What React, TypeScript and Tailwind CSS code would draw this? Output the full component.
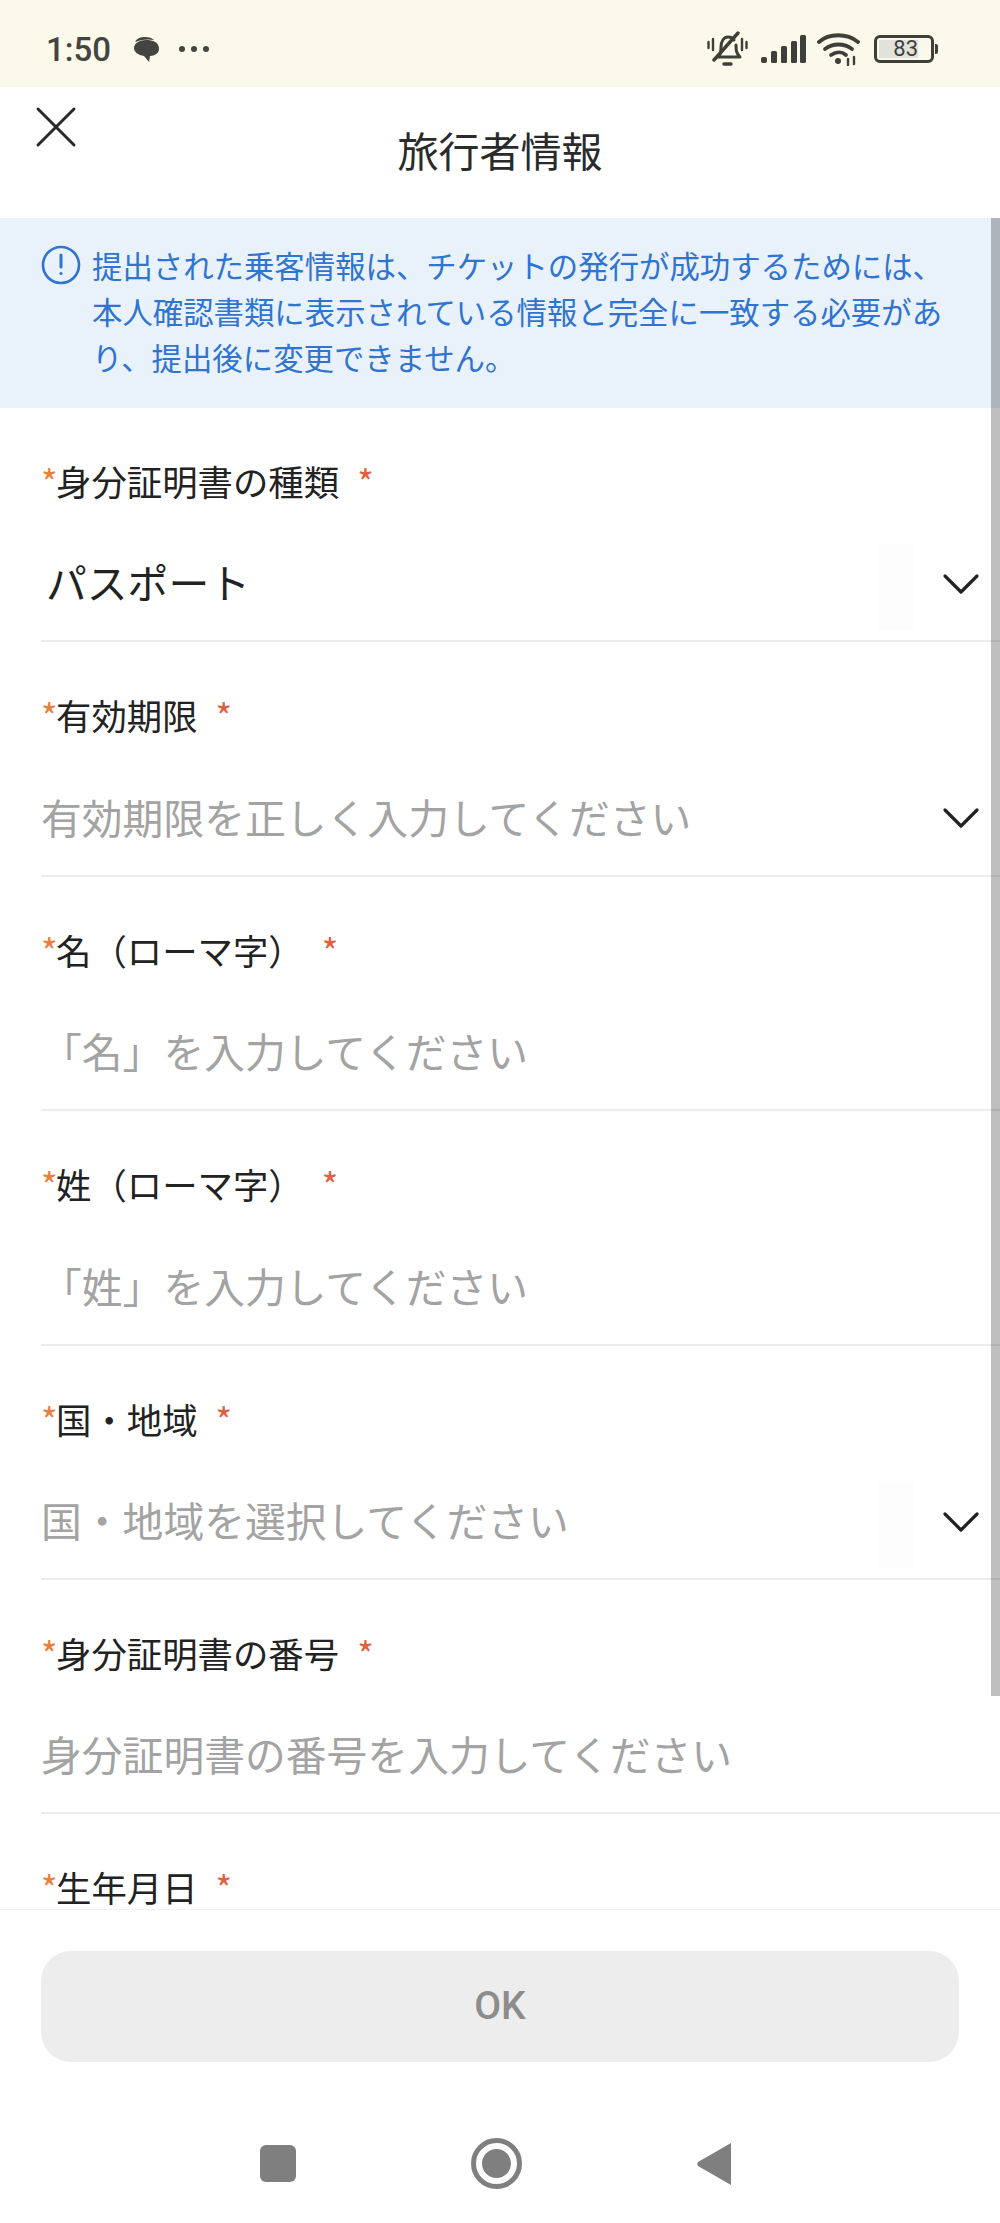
import { ChevronDown, X } from "lucide-react";

const CJK = "font-['Noto_Sans_CJK_JP','Noto_Sans',sans-serif]";

const fields = [
  { label: "身分証明書の種類", value: "パスポート", select: true, ghost: true },
  { label: "有効期限", placeholder: "有効期限を正しく入力してください", select: true },
  { label: "名（ローマ字）", placeholder: "「名」を入力してください" },
  { label: "姓（ローマ字）", placeholder: "「姓」を入力してください" },
  { label: "国・地域", placeholder: "国・地域を選択してください", select: true, ghost: true },
  { label: "身分証明書の番号", placeholder: "身分証明書の番号を入力してください" },
];

function Label({ text }: { text: string }) {
  return (
    <div className="flex h-[62px] items-center text-[35.4px] leading-[62px] text-[#222222]">
      <span className="w-[15px] text-[#e8803c]">*</span>
      <span>{text}</span>
      <span className="ml-[18px] text-[#e2603f]">*</span>
    </div>
  );
}

function Field({ label, value, placeholder, select, ghost }: { label: string; value?: string; placeholder?: string; select?: boolean; ghost?: boolean }) {
  return (
    <div className="ml-[41px] h-[234.4px] border-b-2 border-[#ececec] pt-[42px]">
      <Label text={label} />
      <div className="relative mt-[14px] flex h-[112px] items-center justify-between pr-[7px]">
        {value ? (
          <span className="ml-[5px] text-[40.8px] text-[#222222]">{value}</span>
        ) : (
          <span className="text-[40.8px] text-[#a3a3a3]">{placeholder}</span>
        )}
        {ghost && <div className="absolute right-[87px] top-[17px] h-[87px] w-[35px] bg-[#fdfdfd]" />}
        {select && <ChevronDown className="relative mt-[4px]" size={64} strokeWidth={1.2} color="#222222" />}
      </div>
    </div>
  );
}

function StatusIcons() {
  return (
    <div className="flex items-center text-[#3f3f3a]">
      <svg width="41" height="36" viewBox="0 0 41 36" fill="none" stroke="currentColor" strokeWidth="3" strokeLinecap="round" strokeLinejoin="round">
        <path d="M12 25c2-3 2-6 2-9 0-6 3-10 7-10 3 0 5 1 6 3M29 14c0 5 0 8 4 12H11" />
        <path d="M7 29 31 2" strokeWidth="3.4" />
        <path d="M1.5 11v6M6 8v11M35 8v11M39.5 11v6" strokeWidth="2.4" />
        <path d="M17 33h7" strokeWidth="3.4" />
      </svg>
      <svg width="45" height="28" viewBox="0 0 45 28" fill="currentColor" className="ml-[13px]">
        <rect x="0" y="22" width="6" height="6" rx="2" />
        <rect x="10" y="16" width="6" height="12" rx="1.5" />
        <rect x="20" y="11" width="6" height="17" rx="1.5" />
        <rect x="30" y="6" width="6" height="22" rx="1.5" />
        <rect x="39" y="0" width="6" height="28" rx="1.5" />
      </svg>
      <svg width="43" height="33" viewBox="0 0 43 33" fill="none" stroke="currentColor" strokeWidth="3.8" strokeLinecap="round" className="ml-[11px]">
        <path d="M2 9C12 0 30 0 41 9" />
        <path d="M8 16c8-6 19-6 27 0" />
        <path d="M14 22c5-3.500 11-3.500 15 0" />
        <circle cx="21" cy="28" r="3" fill="currentColor" stroke="none" />
        <path d="M31 26v6M37 24v7" strokeWidth="2.4" />
      </svg>
      <div className="ml-[14px] flex items-center gap-[1px]">
        <div className="h-[28px] w-[60px] rounded-[6px] border-[3px] border-[#3f3f3a] p-[2px]">
          <div className="flex h-full w-[39px] items-center justify-end bg-[#e2e2dc] font-['Roboto',sans-serif] text-[22px] leading-none text-[#3f3f3a]">83</div>
        </div>
        <div className="h-[10px] w-[3px] rounded-r-[2px] bg-[#3f3f3a]" />
      </div>
    </div>
  );
}

export default function App() {
  return (
    <div className={`flex h-[2223px] w-[1000px] flex-col overflow-hidden bg-white ${CJK}`}>
      <div className="flex h-[87px] shrink-0 items-center justify-between bg-[#fbf9ea] pl-[46px] pr-[62px] pt-[11px]">
        <div className="flex items-center text-[#444440]">
          <span className="font-['Roboto',sans-serif] text-[33px] font-medium leading-none">1:50</span>
          <svg width="28" height="28" viewBox="0 0 28 28" fill="currentColor" className="ml-[21px]">
            <path d="M3 7C5 3 9 2 13 2c4 0 7 1 9 3-5-1-12-1-19 2z" />
            <path d="M14 5c7 0 13 2 13 9 0 4-4 7-9 7l-1 6-5-6C6 20 2 17 2 13c0-5 6-8 12-8z" />
          </svg>
          <div className="ml-[19px] flex gap-[6px]">
            <span className="h-[6px] w-[6px] rounded-full bg-[#444440]" />
            <span className="h-[6px] w-[6px] rounded-full bg-[#444440]" />
            <span className="h-[6px] w-[6px] rounded-full bg-[#444440]" />
          </div>
        </div>
        <StatusIcons />
      </div>

      <div className="relative flex h-[131px] shrink-0 items-center justify-center bg-white pb-[6px]">
        <X className="absolute left-[20px] top-[4px]" size={72} strokeWidth={1} color="#2a2a2a" />
        <h1 className="text-[41px] font-normal leading-none text-[#2a2a2a]">旅行者情報</h1>
      </div>

      <div className="relative min-h-0 flex-1 overflow-hidden">
        <div className="flex items-start bg-[#e9f1fb] pb-[28px] pl-[41px] pr-[40px] pt-[24px]">
          <svg width="40" height="40" viewBox="0 0 40 40" fill="none" stroke="#2f74d0" strokeWidth="2.6" strokeLinecap="round" className="mt-[3px] shrink-0">
            <circle cx="20" cy="20" r="18" />
            <path d="M20 10v12" strokeWidth="3" />
            <circle cx="20" cy="28.5" r="1.6" fill="#2f74d0" stroke="none" />
          </svg>
          <p className="ml-[11px] text-[30.4px] leading-[46px] text-[#2f74d0]">
            提出された乗客情報は、チケットの発行が成功するためには、本人確認書類に表示されている情報と完全に一致する必要があり、提出後に変更できません。
          </p>
        </div>
        {fields.map((f) => (
          <Field key={f.label} {...f} />
        ))}
        <div className="ml-[41px] pt-[42px]">
          <Label text="生年月日" />
        </div>
        <div className="absolute right-0 top-0 h-[1478px] w-[9px] bg-black/25" />
      </div>

      <div className="flex h-[314px] shrink-0 flex-col border-t border-[#f2f2f2] bg-white px-[41px] pt-[41px]">
        <button className="h-[111px] w-full rounded-[30px] bg-[#ededed] font-['Roboto',sans-serif] text-[39px] font-medium text-[#8c8c8c]">OK</button>
        <div className="mt-[76px] flex items-center justify-center gap-[175px] pr-[9px]">
          <div className="h-[37px] w-[36px] rounded-[6px] bg-[#7f7f7f]" />
          <div className="flex h-[51px] w-[51px] items-center justify-center rounded-full border-[5px] border-[#7f7f7f]">
            <div className="h-[29px] w-[29px] rounded-full bg-[#7f7f7f]" />
          </div>
          <svg width="34" height="42" viewBox="0 0 34 42" fill="#7f7f7f">
            <path d="M34 0v42L1 23c-1-1-1-3 0-4z" />
          </svg>
        </div>
      </div>
    </div>
  );
}
